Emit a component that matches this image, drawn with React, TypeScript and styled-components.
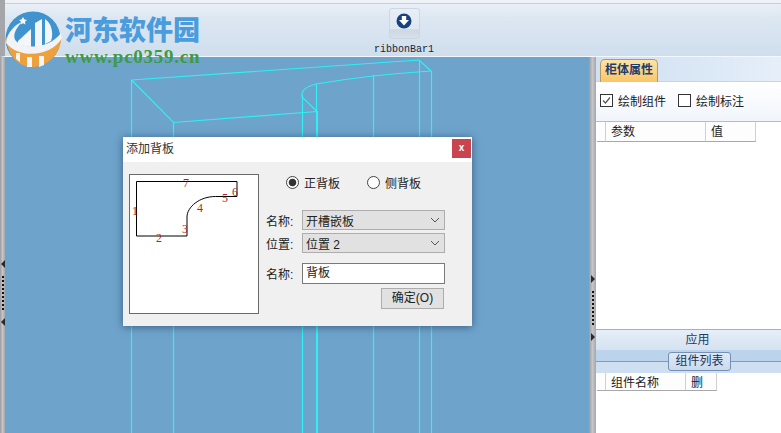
import React from 'react';
import styled, { createGlobalStyle } from 'styled-components';

const CJK = `"Liberation Sans", "Noto Sans CJK SC", sans-serif`;

const GlobalStyle = createGlobalStyle`
  html, body { margin: 0; padding: 0; background: #6ea3cb; }
  body { font-family: ${CJK}; font-size: 12px; color: #222; }
`;

function Logo() {
  return (
    <svg width="60" height="60" viewBox="0 0 60 60">
      <circle cx="29" cy="29" r="27.5" fill="#3f93cf" />
      <path d="M2 27 C12 40 42 44 57 24 C59 40 46 57 29 57 C13 57 3 44 2 27Z" fill="#eea03c" />
      <path d="M2 33 C3 22 12 14 18 12 C10 20 8 28 13 32 C22 40 46 38 57 23 L58 28 C48 46 16 50 2 33Z" fill="#f1f3f6" />
      <path d="M14 31 L27 19 L27 37 L14 35Z" fill="#f4f6f8" />
      <path d="M31 37 L31 13 L38 9 L38 36Z" fill="#f4f6f8" />
      <path d="M41 9 C47 13 50 22 47 31 L41 34Z" fill="#f4f6f8" />
      <path d="M19 7 l1.5 2.5 2.5 .5 -2 1.8 .4 2.7 -2.4 -1.3 -2.4 1.3 .4 -2.7 -2 -1.8 2.5 -.5Z" fill="#f4f6f8" />
      <path d="M23 47 h5 v10 h-5Z M35 46 h5 v9 l-5 2Z M12 43 h4 v9 l-4 -3Z" fill="#f4f6f8" />
    </svg>
  );
}

function DownIcon() {
  return (
    <svg width="16" height="16" viewBox="0 0 16 16">
      <circle cx="8" cy="8" r="7.5" fill="#17437f" />
      <path d="M5.8 3 h4.4 v4 h2.8 L8 12.6 3 7 h2.8Z" fill="#fff" />
    </svg>
  );
}

function WireFrame() {
  return (
    <Wire width="584" height="376" viewBox="0 0 584 376">
      <g fill="none" stroke="#2ff0f4" strokeWidth="1.2">
        <path d="M126.5 23 L414 3 L426 14 M126.5 23 L168.5 65.5 L312 54.5" />
        <path d="M426 14 C380 17 340 22 311 27 C304 29 297 32 297 37 L297 40 L312 54.5" />
        <path d="M126.5 23 V376 M168.5 65.5 V376 M297.5 38 V376 M311.5 27 V54 M368.5 18 V376 M414.5 3 V376 M426.5 14 V376" />
        <path d="M312 54 V376" strokeWidth="2" />
      </g>
    </Wire>
  );
}

function Outline() {
  return (
    <svg width="128" height="138" viewBox="0 0 128 138">
      <path d="M6.5 6.5 H107 V21.5 H85.5 C69.5 21.5 57 32 57 42 V61 H6.5 V6.5" fill="none" stroke="#000" strokeWidth="1" />
      <g fill="#b51f1f" fontFamily="Liberation Serif, serif" fontSize="12">
        <text x="2" y="40">1</text>
        <text x="26" y="67">2</text>
        <text x="52" y="58">3</text>
        <text x="67" y="37">4</text>
        <text x="92" y="27">5</text>
        <text x="102" y="21">6</text>
        <text x="53" y="12">7</text>
      </g>
    </svg>
  );
}

function Chevron() {
  return (
    <svg width="10" height="6" viewBox="0 0 10 6">
      <path d="M1 1 L5 5 L9 1" fill="none" stroke="#555" strokeWidth="1" />
    </svg>
  );
}

function Tick() {
  return (
    <svg width="11" height="11" viewBox="0 0 11 11">
      <path d="M2 5.5 L4.5 8 L9 2.5" fill="none" stroke="#555" strokeWidth="1.2" />
    </svg>
  );
}

export default function App() {
  return (
    <>
      <GlobalStyle />
      <Page>
        <Ribbon>
          <RibbonGroup>
            <RibbonButton>
              <DownIcon />
            </RibbonButton>
            <RibbonLabel>ribbonBar1</RibbonLabel>
          </RibbonGroup>
        </Ribbon>
        <Watermark>
          <Logo />
          <WatermarkText>
            <SiteName>河东软件园</SiteName>
            <SiteUrl>www.pc0359.cn</SiteUrl>
          </WatermarkText>
        </Watermark>
        <Body>
          <Splitter $width={5} $top={203}>
            <Arrow $dir="left" />
            <Dots />
            <Arrow $dir="left" />
          </Splitter>
          <Canvas>
            <WireFrame />
          </Canvas>
          <Splitter $width={7} $top={218}>
            <Arrow $dir="right" />
            <Dots />
            <Arrow $dir="right" />
          </Splitter>
          <Panel>
            <TabStrip>
              <Tab>柜体属性</Tab>
            </TabStrip>
            <CheckRow>
              <CheckItem>
                <Box>
                  <Tick />
                </Box>
                绘制组件
              </CheckItem>
              <CheckItem>
                <Box />
                绘制标注
              </CheckItem>
            </CheckRow>
            <Grid $height={20}>
              <HeaderCell $width={9} />
              <HeaderCell $width={100}>参数</HeaderCell>
              <HeaderCell $width={50}>值</HeaderCell>
            </Grid>
            <GridSpace $height={187} />
            <ApplyButton>应用</ApplyButton>
            <GroupBand>
              <GroupLabel>组件列表</GroupLabel>
            </GroupBand>
            <Grid $height={18}>
              <HeaderCell $width={9} />
              <HeaderCell $width={80}>组件名称</HeaderCell>
              <HeaderCell $width={31}>删</HeaderCell>
            </Grid>
            <GridSpace $height={42} />
          </Panel>
        </Body>
        <Dialog>
          <TitleBar>
            <TitleText>添加背板</TitleText>
            <CloseButton>x</CloseButton>
          </TitleBar>
          <DialogBody>
            <Preview>
              <Outline />
            </Preview>
            <Form>
              <RadioRow>
                <RadioItem>
                  <Radio $checked />
                  正背板
                </RadioItem>
                <RadioItem>
                  <Radio />
                  侧背板
                </RadioItem>
              </RadioRow>
              <FieldRow $top={20}>
                <FieldLabel>名称:</FieldLabel>
                <Select>
                  开槽嵌板
                  <Chevron />
                </Select>
              </FieldRow>
              <FieldRow $top={3}>
                <FieldLabel>位置:</FieldLabel>
                <Select>
                  位置 2
                  <Chevron />
                </Select>
              </FieldRow>
              <FieldRow $top={10}>
                <FieldLabel>名称:</FieldLabel>
                <TextBox>背板</TextBox>
              </FieldRow>
              <ButtonRow>
                <OkButton>确定(O)</OkButton>
              </ButtonRow>
            </Form>
          </DialogBody>
        </Dialog>
      </Page>
    </>
  );
}

const Page = styled.div`
  position: relative;
  width: 781px;
  height: 433px;
  overflow: hidden;
  display: flex;
  flex-direction: column;
`;

const Ribbon = styled.div`
  height: 56px;
  flex: none;
  border-bottom: 1px solid #f4f8fc;
  border-left: 5px solid #a4a6aa;
  background: linear-gradient(#eef2f7 0 3px, #c4d0dc 3px 4px, #e9eff7 4px, #dde7f2 32%, #cfdeed 100%);
  display: flex;
  padding-left: 369px;
`;

const RibbonGroup = styled.div`
  width: 60px;
  display: flex;
  flex-direction: column;
  align-items: center;
  padding-top: 8px;
`;

const RibbonButton = styled.div`
  width: 31px;
  height: 32px;
  box-sizing: border-box;
  padding-top: 4px;
  display: flex;
  justify-content: center;
  border-radius: 3px;
  border: 1px solid #cdd7e2;
  background: linear-gradient(#e8eef5 0%, #dfe7f0 68%, #cdd8e4 72%, #d6dfe9 100%);
`;

const RibbonLabel = styled.div`
  margin-top: 5px;
  font-family: "Liberation Mono", monospace;
  font-size: 10px;
  line-height: 12px;
  color: #223;
  white-space: nowrap;
`;

const Watermark = styled.div`
  position: absolute;
  left: 4px;
  top: 10px;
  display: flex;
  gap: 1px;
`;

const WatermarkText = styled.div`
  display: flex;
  flex-direction: column;
`;

const SiteName = styled.div`
  font-family: "Noto Sans CJK SC", sans-serif;
  font-weight: 900;
  font-size: 27px;
  line-height: 38px;
  color: #4a9cdc;
  white-space: nowrap;
`;

const SiteUrl = styled.div`
  font-family: "Liberation Serif", serif;
  font-weight: 700;
  font-size: 19px;
  line-height: 18px;
  letter-spacing: 0.75px;
  color: #3f9a45;
  white-space: nowrap;
`;

const Body = styled.div`
  flex: 1;
  display: flex;
  min-height: 0;
`;

const Splitter = styled.div<{ $width: number; $top: number }>`
  width: ${(p) => p.$width}px;
  flex: none;
  box-sizing: border-box;
  padding-top: ${(p) => p.$top}px;
  display: flex;
  flex-direction: column;
  align-items: center;
  gap: 8px;
  background: linear-gradient(90deg, #9a9a9e, #c4c6ca 50%, #a4a6aa);
`;

const Arrow = styled.div<{ $dir: 'left' | 'right' }>`
  width: 0;
  height: 0;
  border-top: 4px solid transparent;
  border-bottom: 4px solid transparent;
  border-${(p) => (p.$dir === 'left' ? 'right' : 'left')}: 4px solid #2a2a2e;
`;

const Dots = styled.div`
  width: 2px;
  height: 34px;
  background: repeating-linear-gradient(#111 0 2px, transparent 2px 4px);
`;

const Canvas = styled.div`
  flex: 1;
  background: #6ea3cb;
  min-width: 0;
`;

const Wire = styled.svg`
  display: block;
`;

const Panel = styled.div`
  width: 185px;
  flex: none;
  background: #fff;
  display: flex;
  flex-direction: column;
`;

const TabStrip = styled.div`
  height: 25px;
  box-sizing: border-box;
  padding: 2px 0 0 4px;
  background: linear-gradient(90deg, #cfe0f3, #dbe8f6 60%, #e6eff9);
  border-bottom: 1px solid #c5d5e6;
  display: flex;
`;

const Tab = styled.div`
  width: 58px;
  height: 23px;
  box-sizing: border-box;
  text-align: center;
  line-height: 21px;
  font-weight: 700;
  color: #1d3d6e;
  border: 1px solid #b59a62;
  border-bottom: none;
  border-radius: 5px 5px 0 0;
  background: linear-gradient(#fce3a8, #fbc566);
`;

const CheckRow = styled.div`
  height: 40px;
  box-sizing: border-box;
  display: flex;
  align-items: center;
  gap: 12px;
  padding: 0 0 3px 4px;
  background: linear-gradient(#fff, #f1f5fb);
  border-bottom: 1px solid #b8bcc2;
`;

const CheckItem = styled.div`
  display: flex;
  align-items: center;
  gap: 5px;
  color: #222;
  white-space: nowrap;
`;

const Box = styled.div`
  width: 13px;
  height: 13px;
  box-sizing: border-box;
  border: 1px solid #333;
  background: #fff;
  display: flex;
  align-items: center;
  justify-content: center;
`;

const Grid = styled.div<{ $height: number }>`
  height: ${(p) => p.$height}px;
  flex: none;
  display: flex;
  padding-left: 1px;
`;

const HeaderCell = styled.div<{ $width: number }>`
  width: ${(p) => p.$width}px;
  box-sizing: border-box;
  padding: 1px 0 0 5px;
  line-height: 19px;
  color: #222;
  background: #fdfdfd;
  border-right: 1px solid #d0d0d0;
  border-bottom: 1px solid #a8a8a8;
`;

const GridSpace = styled.div<{ $height: number }>`
  height: ${(p) => p.$height}px;
  flex: none;
  background: #fff;
`;

const ApplyButton = styled.div`
  height: 21px;
  flex: none;
  box-sizing: border-box;
  padding-left: 18px;
  text-align: center;
  line-height: 21px;
  color: #1f3a63;
  border-top: 1px solid #a5b0bc;
  background: linear-gradient(#e6eef8, #d5e2f1);
`;

const GroupBand = styled.div`
  height: 23px;
  flex: none;
  box-sizing: border-box;
  display: flex;
  justify-content: center;
  align-items: center;
  padding-left: 22px;
  background: linear-gradient(#bcd3ec 0 47%, #7f9cbf 47% 52%, #cddff1 52%);
`;

const GroupLabel = styled.div`
  width: 63px;
  height: 19px;
  box-sizing: border-box;
  text-align: center;
  line-height: 17px;
  color: #1c3458;
  border: 1px solid #7590b3;
  border-radius: 3px;
  background: linear-gradient(#dfe9f6, #c9daee);
`;

const Dialog = styled.div`
  position: absolute;
  left: 123px;
  top: 137px;
  width: 349px;
  height: 189px;
  background: #f0f0f0;
  box-shadow: 0 1px 8px rgba(30, 60, 90, 0.65);
  display: flex;
  flex-direction: column;
`;

const TitleBar = styled.div`
  height: 25px;
  flex: none;
  background: #fff;
  display: flex;
  justify-content: space-between;
  padding: 2px 1px 0 3px;
  box-sizing: border-box;
`;

const TitleText = styled.div`
  line-height: 21px;
  color: #333;
`;

const CloseButton = styled.div`
  width: 19px;
  height: 19px;
  background: #c8454f;
  color: #fff;
  font-family: "Liberation Sans", sans-serif;
  font-weight: 700;
  font-size: 10px;
  line-height: 17px;
  text-align: center;
`;

const DialogBody = styled.div`
  flex: 1;
  display: flex;
  padding: 12px 0 0 6px;
`;

const Preview = styled.div`
  width: 130px;
  height: 140px;
  box-sizing: border-box;
  border: 1px solid #6a6a6a;
  background: #fff;
  flex: none;
`;

const Form = styled.div`
  margin-left: 7px;
  width: 179px;
  display: flex;
  flex-direction: column;
`;

const RadioRow = styled.div`
  display: flex;
  gap: 27px;
  padding: 0 0 0 20px;
  height: 16px;
`;

const RadioItem = styled.div`
  display: flex;
  align-items: center;
  gap: 5px;
  color: #222;
  white-space: nowrap;
`;

const Radio = styled.div<{ $checked?: boolean }>`
  width: 13px;
  height: 13px;
  box-sizing: border-box;
  border-radius: 50%;
  border: 1px solid #444;
  background: ${(p) =>
    p.$checked ? 'radial-gradient(circle, #333 0 3.4px, #fff 4.2px)' : '#fff'};
`;

const FieldRow = styled.div<{ $top: number }>`
  display: flex;
  align-items: center;
  margin-top: ${(p) => p.$top}px;
`;

const FieldLabel = styled.div`
  width: 36px;
  flex: none;
  color: #222;
`;

const Select = styled.div`
  width: 143px;
  height: 20px;
  box-sizing: border-box;
  display: flex;
  align-items: center;
  justify-content: space-between;
  padding: 0 4px 0 3px;
  background: #e1e1e1;
  border: 1px solid #adadad;
  color: #222;
`;

const TextBox = styled.div`
  width: 143px;
  height: 21px;
  box-sizing: border-box;
  padding-left: 3px;
  line-height: 18px;
  background: #fff;
  border: 1px solid #7a7a7a;
  color: #222;
`;

const ButtonRow = styled.div`
  display: flex;
  justify-content: flex-end;
  margin-top: 4px;
  padding-right: 1px;
`;

const OkButton = styled.div`
  width: 63px;
  height: 21px;
  box-sizing: border-box;
  text-align: center;
  line-height: 19px;
  background: #e1e1e1;
  border: 1px solid #adadad;
  color: #222;
`;
